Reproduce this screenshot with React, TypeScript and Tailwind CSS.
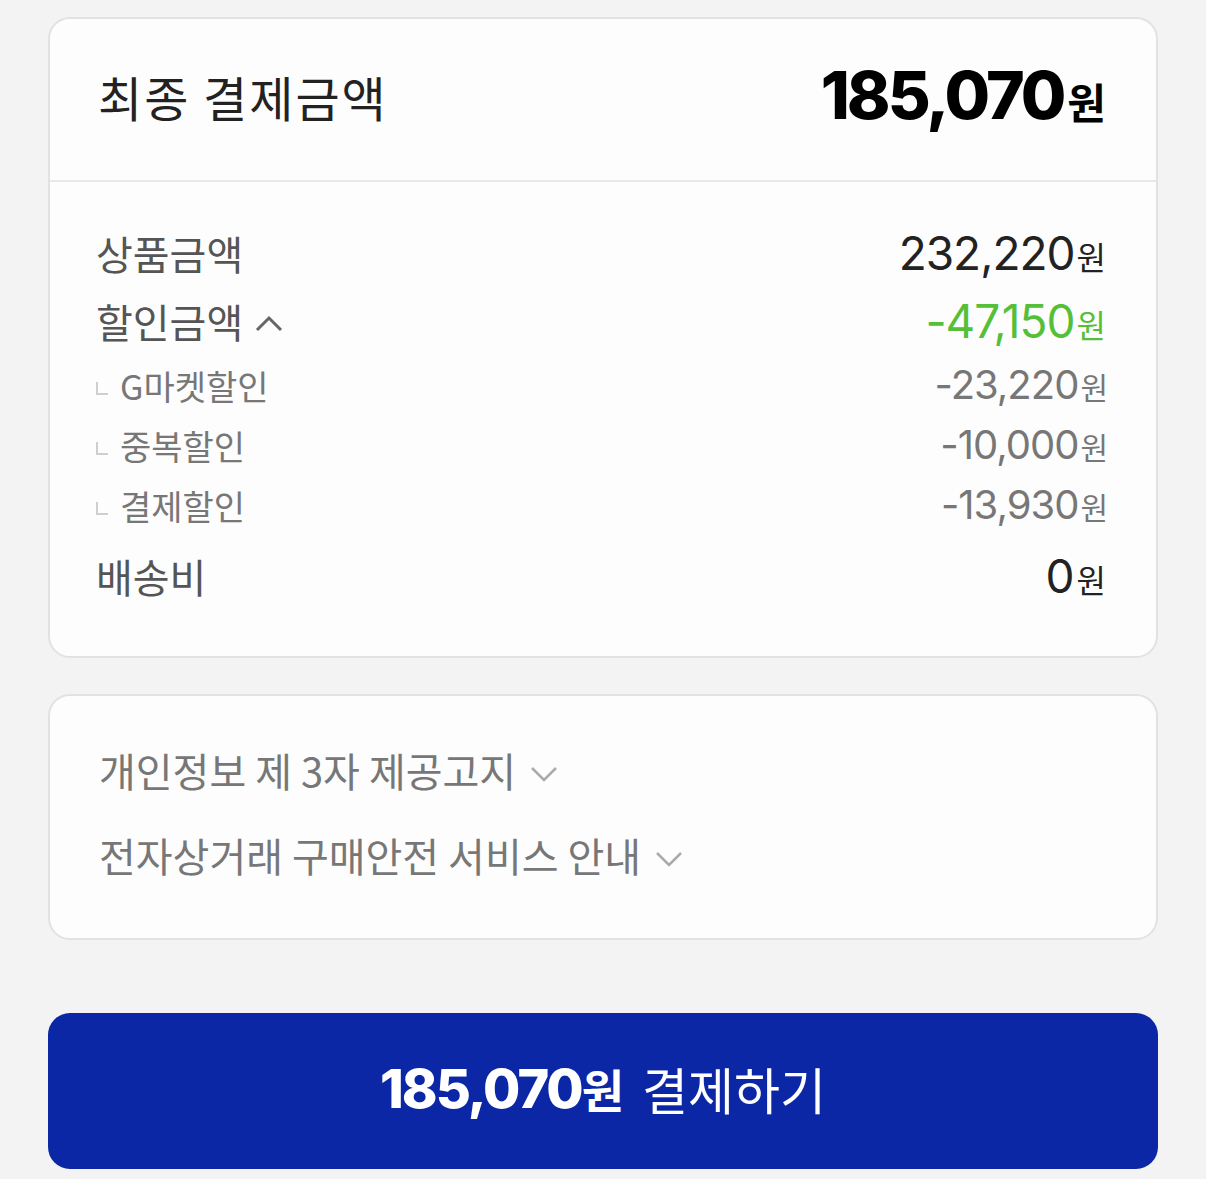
import React from 'react';

const num = "font-['Inter','Noto_Sans_CJK_KR',sans-serif]";
const kr = "font-['Noto_Sans_CJK_KR',sans-serif]";

const ChevronUp: React.FC<{ className?: string }> = ({ className }) => (
  <svg className={className} viewBox="0 0 28 18" fill="none" stroke="currentColor" strokeWidth="3">
    <path d="M2 16 L14 4 L26 16" />
  </svg>
);

const ChevronDown: React.FC<{ className?: string }> = ({ className }) => (
  <svg className={className} viewBox="0 0 28 18" fill="none" stroke="currentColor" strokeWidth="2.5">
    <path d="M2 3 L14 15 L26 3" />
  </svg>
);

const Won: React.FC<{ value: string; className?: string; unitClass?: string }> = ({ value, className, unitClass }) => (
  <span className={`${num} ${className ?? ''}`}>
    {value}
    <span className={`${kr} ${unitClass ?? ''}`}>원</span>
  </span>
);

const subRows = [
  { label: 'G마켓할인', value: '-23,220' },
  { label: '중복할인', value: '-10,000' },
  { label: '결제할인', value: '-13,930' },
];

const App: React.FC = () => {
  return (
    <div className="min-h-[1179px] bg-[#f3f3f3] px-12 pt-[17px]">
      {/* 결제금액 카드 */}
      <section className="rounded-[22px] border-2 border-[#e2e2e2] bg-[#fdfdfd]">
        <div className="flex h-[161px] items-center justify-between pb-[8px] pl-[48px] pr-[50px]">
          <h2 className={`${kr} text-[48px] font-normal tracking-[2px] text-[#222]`}>최종 결제금액</h2>
          <Won
            value="185,070"
            className="text-[66px] font-extrabold tracking-[-3px] text-black"
            unitClass="ml-1 text-[42px] font-bold tracking-normal"
          />
        </div>
        <div className="border-t-2 border-[#e8e8e8] pl-[46px] pr-[50px] pt-[37px] pb-[46px]">
          <div className="flex h-[68px] items-center justify-between">
            <span className={`${kr} text-[40px] text-[#555]`}>상품금액</span>
            <Won value="232,220" className="text-[46px] tracking-[-1px] text-[#222]" unitClass="ml-0.5 text-[32px] tracking-normal" />
          </div>
          <div className="flex h-[68px] items-center justify-between">
            <span className="flex items-center gap-[12px]">
              <span className={`${kr} text-[40px] text-[#555]`}>할인금액</span>
              <ChevronUp className="mt-[4px] h-[18px] w-[28px] text-[#666]" />
            </span>
            <Won value="-47,150" className="text-[46px] tracking-[-1px] text-[#55c037]" unitClass="ml-0.5 text-[32px] tracking-normal" />
          </div>
          {subRows.map((r) => (
            <div key={r.label} className="flex h-[60px] items-center justify-between">
              <span className="flex items-center">
                <span className="mr-[12px] mt-[6px] h-[13px] w-[12px] border-b-2 border-l-2 border-[#cfcfcf]" />
                <span className={`${kr} text-[34px] text-[#777]`}>{r.label}</span>
              </span>
              <Won value={r.value} className="mr-[-2px] text-[40px] tracking-[-1px] text-[#777]" unitClass="ml-0.5 text-[30px] tracking-normal" />
            </div>
          ))}
          <div className="mt-[7px] flex h-[68px] items-center justify-between">
            <span className={`${kr} text-[40px] text-[#555]`}>배송비</span>
            <Won value="0" className="text-[46px] text-[#222]" unitClass="ml-0.5 text-[32px]" />
          </div>
        </div>
      </section>

      {/* 안내 카드 */}
      <section className="mt-[36px] rounded-[22px] border-2 border-[#e2e2e2] bg-[#fdfdfd] pl-[49px] pt-[31px] pb-[41px]">
        {['개인정보 제 3자 제공고지', '전자상거래 구매안전 서비스 안내'].map((t) => (
          <div key={t} className="flex h-[85px] items-center gap-[14px]">
            <span className={`${kr} text-[40px] text-[#777]`}>{t}</span>
            <ChevronDown className="mt-[8px] h-[18px] w-[28px] text-[#aaa]" />
          </div>
        ))}
      </section>

      {/* 결제 버튼 */}
      <button className="mt-[73px] flex h-[156px] w-full items-center justify-center gap-[18px] rounded-[22px] bg-[#0b27a6] pb-[5px] text-white">
        <Won value="185,070" className="text-[54px] font-extrabold tracking-[-2px]" unitClass="text-[46px] font-bold tracking-normal" />
        <span className={`${kr} text-[50px]`}>결제하기</span>
      </button>
    </div>
  );
};

export default App;
